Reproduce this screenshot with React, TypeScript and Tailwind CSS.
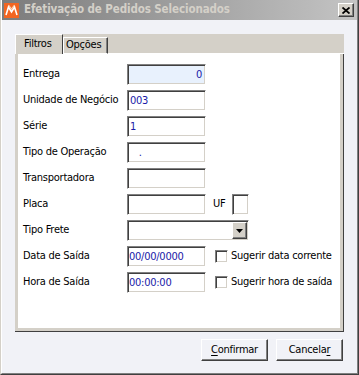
import type { ReactNode } from "react";

const sunken =
  "h-[21px] border border-t-[#808080] border-l-[#808080] border-r-white border-b-white shadow-[inset_1px_1px_0_#404040,inset_-1px_-1px_0_#d4d0c8] text-[#1a1aa8] leading-[19px] whitespace-pre";

const raised =
  "border border-t-white border-l-white border-r-[#404040] border-b-[#404040] shadow-[inset_-1px_-1px_0_#808080]";

function Row({ label, children }: { label: string; children: ReactNode }) {
  return (
    <div className="flex items-center h-[21px]">
      <span className="w-[104px] shrink-0">{label}</span>
      {children}
    </div>
  );
}

function Check({ label }: { label: string }) {
  return (
    <div className="flex items-center ml-[9px]">
      <span className="w-[13px] h-[13px] border border-t-[#808080] border-l-[#808080] border-r-white border-b-white shadow-[inset_1px_1px_0_#404040,inset_-1px_-1px_0_#d4d0c8] bg-white" />
      <span className="ml-[3px]">{label}</span>
    </div>
  );
}

function AppIcon() {
  return (
    <svg width="15" height="15" viewBox="0 0 15 15">
      <rect width="15" height="15" fill="#f26522" />
      <path d="M2 12 L4.5 4 L7.5 9 L10.5 4 L13 12" fill="none" stroke="#fff" strokeWidth="1.6" />
      <path d="M4.5 2 L7.5 6 L10.5 2" fill="none" stroke="#ffd0b0" strokeWidth="1.2" />
    </svg>
  );
}

export default function App() {
  return (
    <div className="w-[359px] h-[375px] border-l border-l-[#d4d0c8] border-r border-r-[#404040] border-b border-b-[#404040] font-['DejaVu_Sans_Condensed','Liberation_Sans',sans-serif] text-[11px] tracking-[-0.25px] text-black">
      <div className="h-full flex flex-col bg-[#f1f2f7] border-l border-l-white border-r border-r-[#808080] border-b border-b-[#808080]">
        {/* title bar */}
        <div className="h-[20px] shrink-0 flex items-center bg-linear-to-r from-[#7c7c7c] to-[#c4c4c4] pl-[2px] pr-[3px]">
          <AppIcon />
          <span className="ml-[5px] font-bold text-[#d4d0c8] text-[11.5px] tracking-[-0.1px]">
            Efetivação de Pedidos Selecionados
          </span>
          <span
            className={`ml-auto w-[16px] h-[14px] bg-[#d4d0c8] flex items-center justify-center ${raised}`}
          >
            <svg width="8" height="7" viewBox="0 0 8 7">
              <path d="M0.5 0.5 L7.5 6.5 M7.5 0.5 L0.5 6.5" stroke="#000" strokeWidth="1.8" />
            </svg>
          </span>
        </div>

        <div className="flex-1 flex flex-col px-[13px] pt-[14px]">
          {/* tabs */}
          <div className="h-[20px] flex items-end bg-[#d4d0c8] shrink-0">
            <div className="h-[20px] w-[48px] border-l border-t border-l-white border-t-white border-r border-r-[#404040] flex items-center pl-[8px] pb-[1px]">
              Filtros
            </div>
            <div className="h-[17px] w-[45px] border-l border-t border-l-white border-t-white border-r border-r-[#404040] shadow-[inset_-1px_0_0_#808080] flex items-center pl-[2px] border-b border-b-white">
              Opções
            </div>
            <div className="flex-1 h-full border-b border-b-white" />
          </div>

          {/* panel */}
          <div className="h-[278px] shrink-0 border-r border-b border-[#404040]">
            <div className="h-full bg-white border-l-[3px] border-r-[3px] border-b-[3px] border-[#d4d0c8] pl-[5px] pt-[10px] flex flex-col gap-[5px]">
              <Row label="Entrega">
                <div className={`${sunken} w-[79px] bg-[#e8f1fd] text-right pr-[3px]`}>0</div>
              </Row>
              <Row label="Unidade de Negócio">
                <div className={`${sunken} w-[79px] bg-white px-[2px]`}>003</div>
              </Row>
              <Row label="Série">
                <div className={`${sunken} w-[79px] bg-white px-[2px]`}>1</div>
              </Row>
              <Row label="Tipo de Operação">
                <div className={`${sunken} w-[79px] bg-white px-[2px]`}>{"   ."}</div>
              </Row>
              <Row label="Transportadora">
                <div className={`${sunken} w-[79px] bg-white`} />
              </Row>
              <Row label="Placa">
                <div className={`${sunken} w-[79px] bg-white`} />
                <span className="ml-[7px]">UF</span>
                <div className={`${sunken} w-[17px] ml-[7px] bg-white`} />
              </Row>
              <Row label="Tipo Frete">
                <div className={`${sunken} w-[122px] bg-white flex justify-end items-center pr-[1px]`}>
                  <span
                    className={`w-[15px] h-[17px] bg-[#d4d0c8] flex items-center justify-center ${raised}`}
                  >
                    <svg width="7" height="4" viewBox="0 0 7 4">
                      <path d="M0 0 H7 L3.5 4 Z" fill="#000" />
                    </svg>
                  </span>
                </div>
              </Row>
              <Row label="Data de Saída">
                <div className={`${sunken} w-[79px] bg-white px-[1px]`}>00/00/0000</div>
                <Check label="Sugerir data corrente" />
              </Row>
              <Row label="Hora de Saída">
                <div className={`${sunken} w-[79px] bg-white px-[1px]`}>00:00:00</div>
                <Check label="Sugerir hora de saída" />
              </Row>
            </div>
          </div>

          {/* buttons */}
          <div className="flex justify-end gap-[8px] mt-[7px] pr-[1px]">
            <button className={`w-[67px] h-[22px] bg-[#f1f2f7] ${raised}`}>
              <span className="underline underline-offset-2">C</span>onfirmar
            </button>
            <button className={`w-[67px] h-[22px] bg-[#f1f2f7] ${raised}`}>
              Cancela<span className="underline underline-offset-2">r</span>
            </button>
          </div>
        </div>
      </div>
    </div>
  );
}
